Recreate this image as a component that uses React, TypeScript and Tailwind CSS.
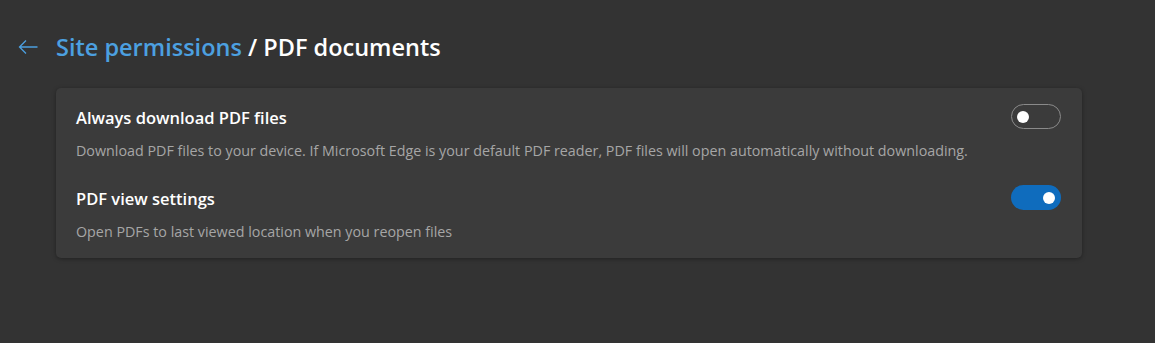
import React from "react";

function Toggle({ on }: { on: boolean }) {
  return (
    <div
      className={
        on
          ? "flex h-[25px] w-[50px] items-center justify-end rounded-full bg-[#0f6cbd] px-[6px]"
          : "flex h-[25px] w-[50px] items-center justify-start rounded-full border border-[#8a8a8a] px-[5px]"
      }
    >
      <div className="h-[12px] w-[12px] rounded-full bg-white" />
    </div>
  );
}

function Row({ title, desc, on }: { title: string; desc: string; on: boolean }) {
  return (
    <div className="flex items-start justify-between">
      <div>
        <div className="text-[16.5px] font-semibold leading-[22px] text-white">{title}</div>
        <div className="mt-[12px] text-[14.3px] leading-[20px] text-[#a6a6a6]">{desc}</div>
      </div>
      <div className="-mt-[3px] mr-[1px]">
        <Toggle on={on} />
      </div>
    </div>
  );
}

export default function App() {
  return (
    <div
      className="h-[343px] w-[1155px] bg-[#333333] pl-[16px] pt-[31px]"
      style={{ fontFamily: '"Segoe UI", "Open Sans", "Noto Sans", sans-serif' }}
    >
      <div className="flex items-center">
        <svg width="24" height="24" viewBox="0 0 24 24" className="mr-[16px]" fill="none">
          <path d="M21.5 12H4M10 5.5 3.5 12 10 18.5" stroke="#4ca0e0" strokeWidth="1.3" />
        </svg>
        <h1 className="text-[23.5px] font-semibold leading-[32px] text-white">
          <span className="text-[#4ca0e0]">Site permissions</span> / PDF documents
        </h1>
      </div>
      <div className="ml-[40px] mt-[25px] w-[1026px] rounded-[5px] bg-[#3b3b3b] px-[20px] pb-[16px] pt-[19px] shadow-[0_1px_4px_rgba(0,0,0,0.35)]">
        <Row
          title="Always download PDF files"
          desc="Download PDF files to your device. If Microsoft Edge is your default PDF reader, PDF files will open automatically without downloading."
          on={false}
        />
        <div className="h-[27px]" />
        <Row
          title="PDF view settings"
          desc="Open PDFs to last viewed location when you reopen files"
          on={true}
        />
      </div>
    </div>
  );
}
